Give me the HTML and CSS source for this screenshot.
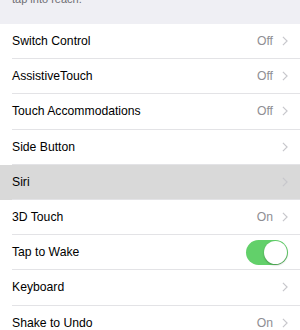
FILE: index.html
```html
<!DOCTYPE html>
<html>
<head>
<meta charset="utf-8">
<link rel="stylesheet" href="styles.css">
</head>
<body>
<div class="screen">
  <div class="header"><p class="footnote">tap into reach.</p></div>
  <ul class="list">
    <li class="row"><div class="cell"><span class="label">Switch Control</span><span class="value">Off</span><svg class="chev" viewBox="0 0 7 12"><path d="M1 1l5 5-5 5"/></svg></div></li>
    <li class="row"><div class="cell"><span class="label">AssistiveTouch</span><span class="value">Off</span><svg class="chev" viewBox="0 0 7 12"><path d="M1 1l5 5-5 5"/></svg></div></li>
    <li class="row"><div class="cell"><span class="label">Touch Accommodations</span><span class="value">Off</span><svg class="chev" viewBox="0 0 7 12"><path d="M1 1l5 5-5 5"/></svg></div></li>
    <li class="row"><div class="cell"><span class="label">Side Button</span><svg class="chev" viewBox="0 0 7 12"><path d="M1 1l5 5-5 5"/></svg></div></li>
    <li class="row selected"><div class="cell"><span class="label">Siri</span><svg class="chev" viewBox="0 0 7 12"><path d="M1 1l5 5-5 5"/></svg></div></li>
    <li class="row"><div class="cell"><span class="label">3D Touch</span><span class="value">On</span><svg class="chev" viewBox="0 0 7 12"><path d="M1 1l5 5-5 5"/></svg></div></li>
    <li class="row"><div class="cell"><span class="label">Tap to Wake</span><span class="toggle on"><span class="knob"></span></span></div></li>
    <li class="row"><div class="cell"><span class="label">Keyboard</span><svg class="chev" viewBox="0 0 7 12"><path d="M1 1l5 5-5 5"/></svg></div></li>
    <li class="row"><div class="cell"><span class="label">Shake to Undo</span><span class="value">On</span><svg class="chev" viewBox="0 0 7 12"><path d="M1 1l5 5-5 5"/></svg></div></li>
  </ul>
</div>
</body>
</html>
```
FILE: styles.css
```css
html, body {
  margin: 0;
  padding: 0;
  background: #ffffff;
}
.screen {
  width: 300px;
  height: 330px;
  overflow: hidden;
  font-family: "Liberation Sans", Arial, sans-serif;
}
.header {
  height: 24px;
  background: #efeff4;
  overflow: hidden;
  padding: 0 12px;
}
.footnote {
  margin: -7px 0 0;
  font-size: 11px;
  line-height: 13px;
  color: #6d6d72;
}
.list {
  list-style: none;
  margin: 0;
  padding: 0;
  background: #ffffff;
}
.row {
  padding-left: 12px;
  background: #ffffff;
}
.row.selected {
  background: #d9d9d9;
}
.cell {
  height: 34.2px;
  display: flex;
  align-items: center;
  padding-right: 12px;
  border-bottom: 1px solid #e3e3e6;
}
.label {
  flex: 1;
  font-size: 12.2px;
  color: #000000;
}
.value {
  font-size: 12.2px;
  color: #8e8e93;
  margin-right: 9px;
}
.chev {
  width: 6px;
  height: 10px;
  fill: none;
  stroke: #c7c7cc;
  stroke-width: 1.4;
}
.toggle {
  width: 42px;
  height: 25px;
  border-radius: 13px;
  background: #62d06a;
  display: flex;
  align-items: center;
  justify-content: flex-end;
  padding: 0 1px;
  box-sizing: border-box;
}
.knob {
  width: 23px;
  height: 23px;
  border-radius: 50%;
  background: #ffffff;
  box-shadow: 0 1px 2px rgba(0,0,0,0.3);
}
```
